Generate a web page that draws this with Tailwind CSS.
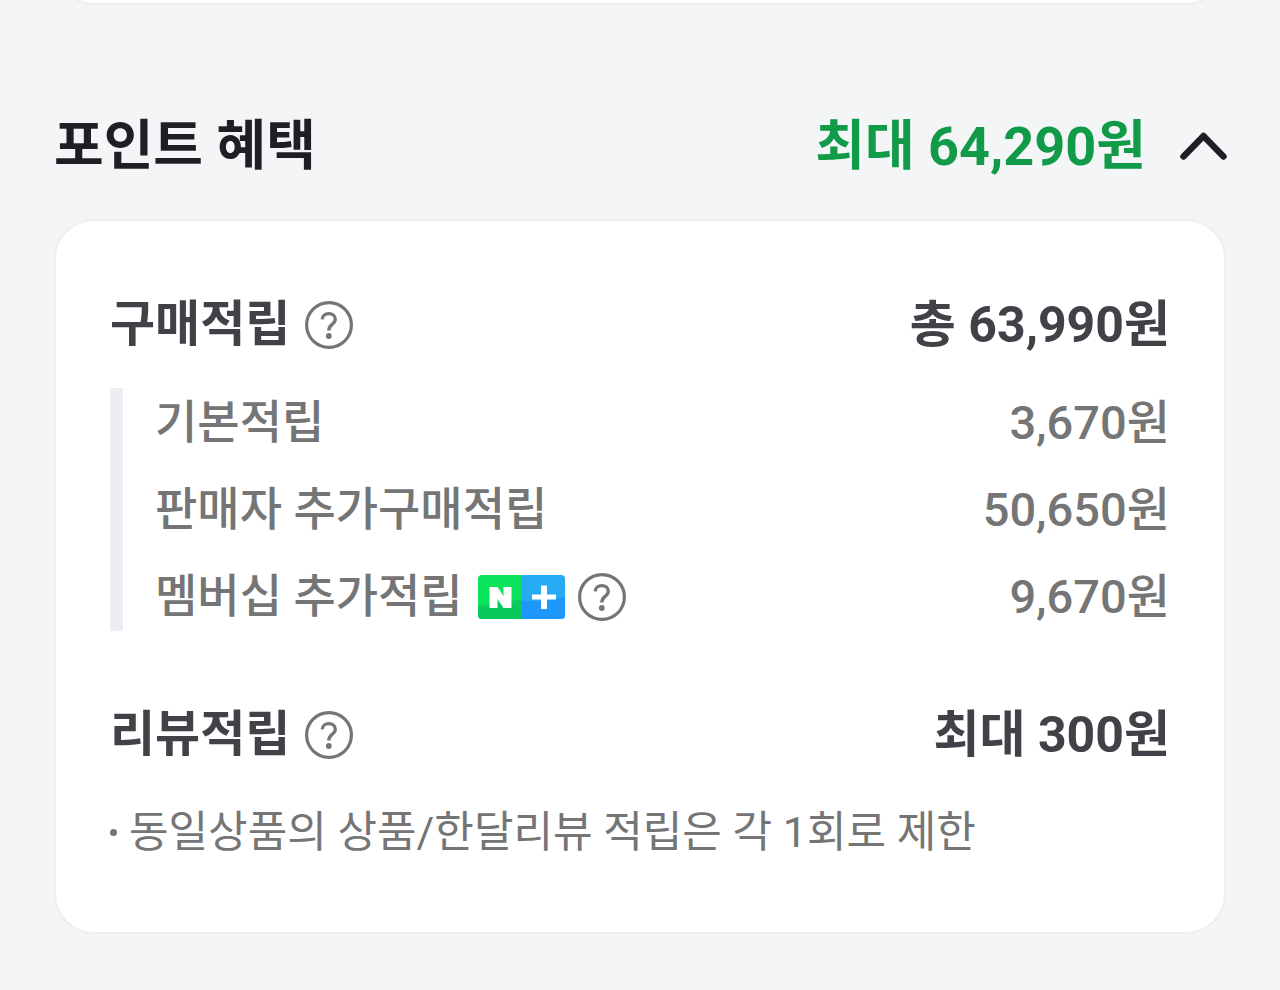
<!DOCTYPE html>
<html lang="ko">
<head>
<meta charset="utf-8">
<meta name="viewport" content="width=device-width, initial-scale=1">
<title>포인트 혜택</title>
<script src="https://cdn.jsdelivr.net/npm/@tailwindcss/browser@4"></script>
</head>
<body class="min-h-screen bg-[#f3f5f7] font-[Roboto,'Noto_Sans_CJK_KR',sans-serif] text-[#757575]">
<svg class="hidden" aria-hidden="true">
  <symbol id="help" viewBox="0 0 48 48">
    <circle cx="24" cy="24" r="22.4" fill="none" stroke="currentColor" stroke-width="3.2"/>
    <path d="M17.2 18.4C17.4 15 20.1 12.7 23.8 12.7C27.6 12.7 30.3 14.9 30.3 18.2C30.3 20.6 28.9 22 26.9 23.6C24.7 25.3 23.8 26.4 23.8 29.6" fill="none" stroke="currentColor" stroke-width="3.3"/>
    <circle cx="23.8" cy="35" r="2.9" fill="currentColor"/>
  </symbol>
</svg>
<main class="px-[54px] pb-14">
  <div class="flex h-[5px] items-end overflow-hidden" aria-hidden="true">
    <div class="h-20 w-full shrink-0 rounded-[40px] border-2 border-[#ebedf0] bg-white"></div>
  </div>
  <section>
    <header class="mt-[102px] flex h-20 items-center justify-between">
      <h1 class="text-[54px] leading-[80px] font-bold text-[#1e1e23]">포인트 혜택</h1>
      <div class="flex items-center gap-8">
        <strong class="text-[54px] leading-[80px] font-bold text-[#119b48]">최대 64,290원</strong>
        <button type="button" aria-label="접기" aria-expanded="true" class="text-[#1e1e23]">
          <svg class="h-12 w-12 overflow-visible" viewBox="0 0 48 48" fill="none" stroke="currentColor" stroke-width="6.4" stroke-linecap="round" stroke-linejoin="round"><path d="M5.500 33.500L25.500 13L45.500 33.500"/></svg>
        </button>
      </div>
    </header>
    <div class="mt-8 rounded-[40px] border-2 border-[#edeff2] bg-white px-[54px] py-[68px]">
      <div class="flex h-[72px] items-center justify-between font-bold text-[#424148]">
        <div class="flex items-center gap-[15px]">
          <h2 class="text-[49px] leading-[72px]">구매적립</h2>
          <button type="button" aria-label="구매적립 안내" class="text-[#757575]"><svg class="h-12 w-12"><use href="#help"/></svg></button>
        </div>
        <span class="text-[50px] leading-[72px]">총 63,990원</span>
      </div>
      <ul class="mt-[27px] flex flex-col gap-[18px] border-l-[13px] border-[#edeef2] pl-8 font-medium">
        <li class="flex h-[69px] items-center justify-between">
          <span class="text-[46px] leading-[69px]">기본적립</span>
          <span class="text-[47px] leading-[69px]">3,670원</span>
        </li>
        <li class="flex h-[69px] items-center justify-between">
          <span class="text-[46px] leading-[69px]">판매자 추가구매적립</span>
          <span class="text-[47px] leading-[69px]">50,650원</span>
        </li>
        <li class="flex h-[69px] items-center justify-between">
          <div class="flex items-center">
            <span class="text-[46px] leading-[69px]">멤버십 추가적립</span>
            <svg class="ml-[15px] h-11 w-[87px]" viewBox="0 0 87 44" role="img" aria-label="네이버플러스 멤버십">
              <defs><clipPath id="badge"><rect width="87" height="44" rx="4"/></clipPath></defs>
              <g clip-path="url(#badge)">
                <path fill="#08e35b" d="M0 0H44V44H0z"/>
                <path fill="#0ac95c" d="M0 31C14 30 29 27 44 24V44H0z"/>
                <path fill="#26aaf3" d="M44 0H87V44H44z"/>
                <path fill="#1d98fa" d="M44 26C58 27 74 25 87 22V44H44z"/>
              </g>
              <path fill="#fff" d="M11.500 12H19.500L25.500 21V12H33.500V33H25.500L19.500 24V33H11.500z"/>
              <path fill="#fff" d="M63 10.500H69V19.500H78V24.500H69V34H63V24.500H54V19.500H63z"/>
            </svg>
            <button type="button" aria-label="멤버십 추가적립 안내" class="ml-[13px]"><svg class="h-12 w-12"><use href="#help"/></svg></button>
          </div>
          <span class="text-[47px] leading-[69px]">9,670원</span>
        </li>
      </ul>
      <div class="mt-[68px] flex h-[72px] items-center justify-between font-bold text-[#424148]">
        <div class="flex items-center gap-[15px]">
          <h2 class="text-[49px] leading-[72px]">리뷰적립</h2>
          <button type="button" aria-label="리뷰적립 안내" class="text-[#757575]"><svg class="h-12 w-12"><use href="#help"/></svg></button>
        </div>
        <span class="text-[50px] leading-[72px]">최대 300원</span>
      </div>
      <p class="mt-[29px] flex items-center gap-3 text-[43px] leading-[64px]"><span class="h-[7px] w-[7px] shrink-0 rounded-full bg-[#757575]"></span>동일상품의 상품/한달리뷰 적립은 각 1회로 제한</p>
    </div>
  </section>
</main>
</body>
</html>
